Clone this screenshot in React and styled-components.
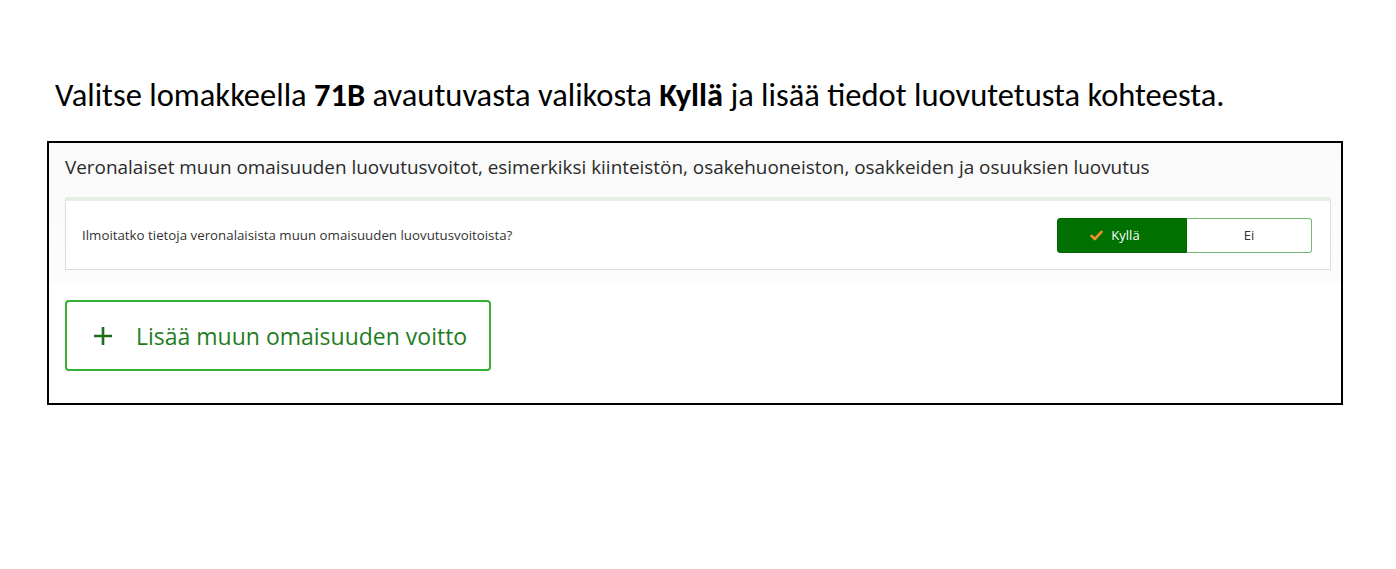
import React from 'react';
import styled, { createGlobalStyle } from 'styled-components';

const GlobalStyle = createGlobalStyle`
  html, body {
    margin: 0;
    padding: 0;
    background: #fff;
  }
  * {
    box-sizing: border-box;
  }
`

const App = () => (
  <>
    <GlobalStyle />
    <Page>
      <Title>
        Valitse lomakkeella <b>71B</b> avautuvasta valikosta <b>Kyllä</b> ja lisää tiedot luovutetusta kohteesta.
      </Title>
      <Frame>
        <Section>
          <Heading>
            Veronalaiset muun omaisuuden luovutusvoitot, esimerkiksi kiinteistön, osakehuoneiston, osakkeiden ja osuuksien luovutus
          </Heading>
          <Card>
            <Question>Ilmoitatko tietoja veronalaisista muun omaisuuden luovutusvoitoista?</Question>
            <Toggle>
              <ToggleButton active>
                <svg width="13" height="11" viewBox="0 0 13 11">
                  <path d="M1.5 5.8 L4.8 9 L11.5 1.8" fill="none" stroke="#f0902a" strokeWidth="2.6" strokeLinecap="round" strokeLinejoin="round" />
                </svg>
                Kyllä
              </ToggleButton>
              <ToggleButton>Ei</ToggleButton>
            </Toggle>
          </Card>
        </Section>
        <AddButton>
          <svg width="20" height="20" viewBox="0 0 20 20">
            <path d="M10 1 V19 M1 10 H19" stroke="#1c6e1c" strokeWidth="2.6" />
          </svg>
          Lisää muun omaisuuden voitto
        </AddButton>
      </Frame>
    </Page>
  </>
);

export default App;

const Page = styled.div`
  width: 1396px;
  height: 569px;
  padding: 76px 0 0 47px;
`

const Title = styled.h1`
  margin: 0 0 27px 8px;
  font-family: Carlito, Calibri, "Open Sans", sans-serif;
  font-weight: normal;
  font-size: 32.5px;
  line-height: 38px;
  color: #000;

  b {
    font-weight: bold;
  }
`

const Frame = styled.div`
  width: 1296px;
  height: 264px;
  border: 2px solid #000;
  padding: 0 10px 0 16px;
  font-family: "Open Sans", "Noto Sans", sans-serif;
`

const Section = styled.div`
  margin-left: -16px;
  margin-right: -10px;
  padding: 0 10px 14px 16px;
  background: linear-gradient(#fafafa, #fcfcfc);
`

const Heading = styled.div`
  height: 54px;
  display: flex;
  align-items: center;
  padding-bottom: 6px;
  font-size: 18.9px;
  color: #2a2a2a;
`

const Card = styled.div`
  height: 73px;
  display: flex;
  align-items: center;
  justify-content: space-between;
  padding: 0 18px 0 16px;
  background: #fff;
  border: 1px solid #dcdcdc;
  border-top: 4px solid #e6f1e6;
`

const Question = styled.div`
  font-size: 13.3px;
  color: #333;
`

const Toggle = styled.div`
  display: flex;
  height: 35px;
`

const ToggleButton = styled.div`
  display: flex;
  align-items: center;
  justify-content: center;
  gap: 8px;
  width: ${p => (p.active ? '130px' : '125px')};
  font-size: 13px;
  color: ${p => (p.active ? '#fff' : '#333')};
  background: ${p => (p.active ? '#007000' : '#fff')};
  border: 1px solid ${p => (p.active ? '#006400' : '#72b972')};
  border-left-width: ${p => (p.active ? '1px' : '0')};
  border-radius: ${p => (p.active ? '3px 0 0 3px' : '0 3px 3px 0')};
  padding-right: ${p => (p.active ? '14px' : '0')};
`

const AddButton = styled.div`
  display: flex;
  align-items: center;
  gap: 23px;
  width: 426px;
  height: 71px;
  margin-top: 16px;
  padding-left: 26px;
  border: 2px solid #34b034;
  border-radius: 4px;
  background: #fff;
  font-size: 23px;
  color: #1f7d1f;
`
